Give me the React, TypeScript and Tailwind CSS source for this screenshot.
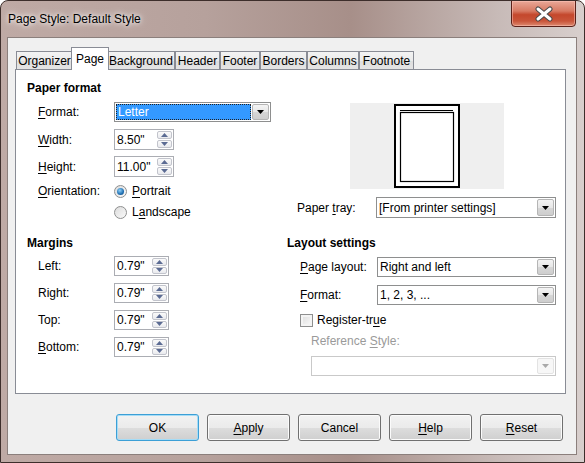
import React from "react";

type Kids = { children?: React.ReactNode };

const U = ({ children }: Kids) => (
  <span className="underline decoration-1 underline-offset-[2px]">{children}</span>
);

function Arrow({ color = "#000" }: { color?: string }) {
  return (
    <svg width="7" height="4" viewBox="0 0 7 4">
      <path d="M0 0h7L3.5 4z" fill={color} />
    </svg>
  );
}

function Combo({
  children,
  className = "",
  selected,
  disabled,
}: Kids & { className?: string; selected?: boolean; disabled?: boolean }) {
  return (
    <div
      className={`flex bg-white border ${disabled ? "border-[#c9c9c9]" : "border-[#8e8f8f]"} ${className}`}
    >
      <div className="flex-1 flex items-center p-[1px] min-w-0">
        {selected ? (
          <div className="h-full flex-1 flex items-center bg-[#3399ff] text-white border border-dotted border-[#222] pl-[1px]">
            {children}
          </div>
        ) : (
          <span className="pl-[1px]">{children}</span>
        )}
      </div>
      <div
        className={`w-[17px] my-[1px] mr-[1px] flex items-center justify-center border rounded-[2px] ${
          disabled
            ? "border-[#e3e3e3] bg-[#f7f7f7]"
            : "border-[#b5b5b5] bg-[linear-gradient(#f4f4f4,#e7e7e7_50%,#d6d6d6_51%,#cecece)]"
        }`}
      >
        <Arrow color={disabled ? "#a9a9a9" : "#000"} />
      </div>
    </div>
  );
}

function SpinBtn({ up }: { up?: boolean }) {
  return (
    <div className="flex-1 flex items-center justify-center rounded-[2px] border border-[#c2c4cc] bg-[linear-gradient(#fafafa,#e9eaee)]">
      <svg width="7" height="4" viewBox="0 0 7 4">
        <path d={up ? "M0 4h7L3.5 0z" : "M0 0h7L3.5 4z"} fill="#5b6b93" />
      </svg>
    </div>
  );
}

function Spin({ value, className = "" }: { value: string; className?: string }) {
  return (
    <div className={`flex bg-white border border-[#abadb3] ${className}`}>
      <div className="flex-1 flex items-center pl-[2px]">{value}</div>
      <div className="w-[15px] flex flex-col gap-[1px] py-[1px] mr-[1px]">
        <SpinBtn up />
        <SpinBtn />
      </div>
    </div>
  );
}

function Radio({ checked }: { checked?: boolean }) {
  return (
    <div className="w-[13px] h-[13px] rounded-full border border-[#8e8f8f] bg-[linear-gradient(135deg,#dcdcdc,#fafafa)] flex items-center justify-center">
      {checked && (
        <div className="w-[7px] h-[7px] rounded-full bg-[radial-gradient(circle_at_40%_35%,#8fd0f7,#1f6fb2_60%,#0c3e6e)]" />
      )}
    </div>
  );
}

function Button({ children, focus }: Kids & { focus?: boolean }) {
  return (
    <div
      className={`w-[83px] h-[27px] flex items-center justify-center rounded-[3px] border ${
        focus
          ? "border-[#3c9fd6] shadow-[inset_0_0_0_1px_#a6dcf6]"
          : "border-[#707070] shadow-[inset_0_0_0_1px_#fbfbfb]"
      } bg-[linear-gradient(#f2f2f2,#ebebeb_50%,#dddddd_51%,#cfcfcf)]`}
    >
      <span>{children}</span>
    </div>
  );
}

const tabs: [string, number][] = [
  ["Organizer", 57],
  ["Page", 38],
  ["Background", 68],
  ["Header", 45],
  ["Footer", 40],
  ["Borders", 47],
  ["Columns", 52],
  ["Footnote", 55],
];

export default function App() {
  return (
    <div className="w-[585px] h-[463px] flex flex-col rounded-t-[8px] border border-[#3d2e2b] bg-[linear-gradient(90deg,#bfaaa5,#b6a19c_35%,#a78f89_60%,#c7bab7_85%,#d8cfcd)] font-['Liberation_Sans',Arial,sans-serif] text-[12px] text-black overflow-hidden">
      {/* title bar */}
      <div className="h-[36px] flex items-start">
        <div className="flex-1 h-[36px] flex items-center pl-[7px] [text-shadow:0_0_8px_#ffffff,0_0_4px_#ffffff]">
          Page Style: Default Style
        </div>
        <div className="w-[65px] h-[27px] mr-[8px] -mt-px rounded-b-[4px] border border-[#5a2119] bg-[linear-gradient(#e9a898,#d77a63_40%,#c4472c_55%,#c9553a_80%,#dd8a70)] flex items-center justify-center shadow-[inset_0_0_0_1px_rgba(255,200,190,0.5)]">
          <svg width="20" height="16" viewBox="0 0 20 16">
            <path d="M4 3l12 10M16 3L4 13" stroke="#4a4a4a" strokeWidth="5" strokeLinecap="round" />
            <path d="M4 3l12 10M16 3L4 13" stroke="#ffffff" strokeWidth="3" strokeLinecap="round" />
          </svg>
        </div>
      </div>

      {/* client area */}
      <div className="ml-[6px] w-[570px] h-[418px] border border-[#8b7f7c] bg-[#f0f0f0] flex flex-col">
        {/* tabs */}
        <div className="h-[22px] mt-[9px] ml-[8px] flex items-start">
          {tabs.map(([t, w]) =>
            t === "Page" ? (
              <div
                key={t}
                style={{ width: w }}
                className="relative z-10 -mx-[2px] h-[23px] flex items-center justify-center bg-white border border-b-0 border-[#898c95]"
              >
                {t}
              </div>
            ) : (
              <div
                key={t}
                style={{ width: w }}
                className="mt-[4px] h-[18px] flex items-center justify-center border border-b-0 border-[#898c95] bg-[linear-gradient(#f3f3f3,#ebebeb_50%,#dedede_51%,#e4e4e4)]"
              >
                {t}
              </div>
            )
          )}
        </div>

        {/* panel */}
        <div className="ml-[7px] w-[551px] h-[325px] border border-[#898c95] bg-white flex">
          {/* left column */}
          <div className="w-[271px] pl-[11px] pt-[10px] flex flex-col">
            <div className="h-[16px] flex items-center font-bold">Paper format</div>
            <div className="pl-[11px] flex flex-col">
              <div className="mt-[6px] h-[20px] flex items-center">
                <div className="w-[76px]">
                  <U>F</U>ormat:
                </div>
                <Combo className="w-[157px] h-[20px]" selected>
                  Letter
                </Combo>
              </div>
              <div className="mt-[7px] h-[21px] flex items-center">
                <div className="w-[76px]">
                  <U>W</U>idth:
                </div>
                <Spin value={'8.50"'} className="w-[60px] h-[21px]" />
              </div>
              <div className="mt-[6px] h-[21px] flex items-center">
                <div className="w-[76px]">
                  <U>H</U>eight:
                </div>
                <Spin value={'11.00"'} className="w-[60px] h-[21px]" />
              </div>
              <div className="mt-[6px] h-[16px] flex items-center">
                <div className="w-[76px]">
                  <U>O</U>rientation:
                </div>
                <Radio checked />
                <span className="ml-[5px]">
                  <U>P</U>ortrait
                </span>
              </div>
              <div className="mt-[5px] h-[16px] flex items-center pl-[76px]">
                <Radio />
                <span className="ml-[5px]">
                  L<U>a</U>ndscape
                </span>
              </div>
            </div>

            <div className="mt-[15px] h-[16px] flex items-center font-bold">Margins</div>
            <div className="pl-[11px] flex flex-col">
              {["Left:", "Right:", "Top:", "Bottom:"].map((l, i) => (
                <div key={l} className={`${i === 0 ? "mt-[5px]" : "mt-[7px]"} h-[20px] flex items-center`}>
                  <div className="w-[76px]">
                    {l === "Bottom:" ? (
                      <>
                        <U>B</U>ottom:
                      </>
                    ) : (
                      l
                    )}
                  </div>
                  <Spin value={'0.79"'} className="w-[55px] h-[20px]" />
                </div>
              ))}
            </div>
          </div>

          {/* right column */}
          <div className="flex-1 pr-[9px] flex flex-col">
            <div className="mt-[33px] ml-[63px] w-[154px] h-[86px] bg-[#efefef] flex items-center justify-center">
              <svg width="66" height="84" viewBox="0 0 66 84">
                <rect x="1" y="1" width="64" height="82" fill="#fff" stroke="#000" strokeWidth="2" />
                <line x1="6" y1="6.5" x2="59" y2="6.5" stroke="#000" strokeWidth="1" />
                <rect x="6.5" y="8.5" width="53" height="69" fill="none" stroke="#000" strokeWidth="1.2" />
              </svg>
            </div>
            <div className="mt-[8px] h-[21px] flex items-center">
              <div className="w-[89px] pl-[10px]">
                Paper <U>t</U>ray:
              </div>
              <Combo className="w-[180px] h-[21px]">[From printer settings]</Combo>
            </div>

            <div className="mt-[17px] h-[16px] flex items-center font-bold">Layout settings</div>
            <div className="mt-[6px] h-[20px] flex items-center">
              <div className="w-[90px] pl-[13px]">
                <U>P</U>age layout:
              </div>
              <Combo className="w-[179px] h-[20px]">Right and left</Combo>
            </div>
            <div className="mt-[8px] h-[20px] flex items-center">
              <div className="w-[90px] pl-[13px]">
                <U>F</U>ormat:
              </div>
              <Combo className="w-[179px] h-[20px]">1, 2, 3, ...</Combo>
            </div>
            <div className="mt-[7px] h-[16px] flex items-center pl-[13px]">
              <div className="w-[13px] h-[13px] border border-[#8e8f8f] bg-[linear-gradient(135deg,#dcdcdc,#fbfbfb)] shadow-[inset_0_0_0_2px_#f4f4f4]" />
              <span className="ml-[4px]">
                Register-tr<U>u</U>e
              </span>
            </div>
            <div className="mt-[5px] h-[16px] flex items-center pl-[24px] text-[#9a9a9a]">
              <span>
                Reference <U>S</U>tyle:
              </span>
            </div>
            <div className="mt-[7px] ml-[24px]">
              <Combo className="w-[245px] h-[20px]" disabled />
            </div>
          </div>
        </div>

        {/* buttons */}
        <div className="mt-[20px] pr-[13px] flex justify-end gap-[8px]">
          <Button focus>OK</Button>
          <Button>
            <U>A</U>pply
          </Button>
          <Button>Cancel</Button>
          <Button>
            <U>H</U>elp
          </Button>
          <Button>
            <U>R</U>eset
          </Button>
        </div>
      </div>
    </div>
  );
}
